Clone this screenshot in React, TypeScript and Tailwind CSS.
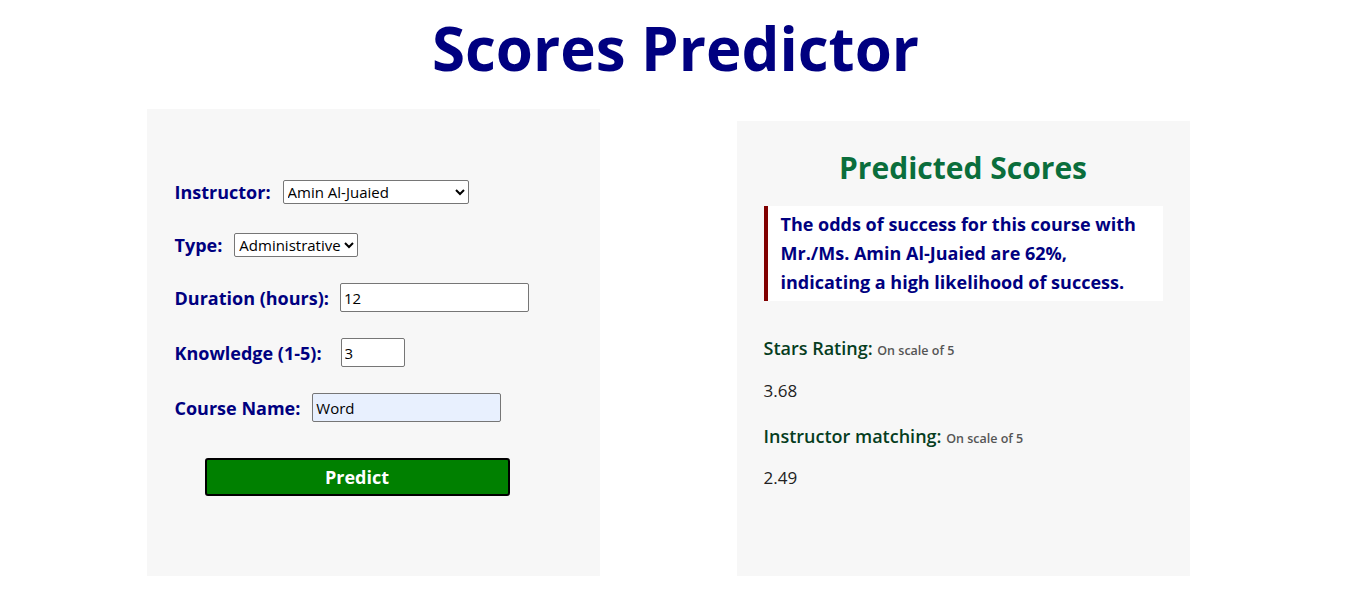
import React from "react";

const font = { fontFamily: '"Open Sans", "Noto Sans", sans-serif' };

const Label = ({ children }: { children: React.ReactNode }) => (
  <label className="text-[18px] font-bold leading-none text-[#000080]">{children}</label>
);

const App = () => {
  return (
    <div className="min-h-[611px] bg-white" style={font}>
      <h1 className="pl-[3px] pt-[8px] text-center text-[60px] font-bold leading-[80px] text-[#000080]">
        Scores Predictor
      </h1>

      <div className="mt-[21px] flex items-end justify-center gap-[137px] pr-[12px]">
        {/* form */}
        <div className="h-[467px] w-[453px] bg-[#f7f7f7] px-[28px] pt-[68px]">
          <div className="flex h-[29px] items-center gap-[12px]">
            <Label>Instructor:</Label>
            <select
              defaultValue="amin"
              className="h-[24px] w-[186px] rounded-[2px] border border-[#767676] bg-white text-[15px] text-black"
            >
              <option value="amin">Amin Al-Juaied</option>
            </select>
          </div>
          <div className="mt-[24px] flex h-[29px] items-center gap-[12px]">
            <Label>Type:</Label>
            <select
              defaultValue="admin"
              className="h-[24px] w-[124px] rounded-[2px] border border-[#767676] bg-white text-[15px] text-black"
            >
              <option value="admin">Administrative</option>
            </select>
          </div>
          <div className="mt-[24px] flex h-[29px] items-center gap-[11px]">
            <Label>Duration (hours):</Label>
            <input
              defaultValue="12"
              className="h-[29px] w-[189px] rounded-[2px] border border-[#767676] bg-white px-[3px] text-[15px] text-black"
            />
          </div>
          <div className="mt-[26px] flex h-[29px] items-center gap-[11px]">
            <Label>Knowledge (1-5):</Label>
            <input
              defaultValue="3"
              className="ml-[8px] h-[29px] w-[64px] rounded-[2px] border border-[#767676] bg-white px-[3px] text-[15px] text-black"
            />
          </div>
          <div className="mt-[26px] flex h-[29px] items-center gap-[12px]">
            <Label>Course Name:</Label>
            <input
              defaultValue="Word"
              className="h-[29px] w-[189px] rounded-[2px] border border-[#767676] bg-[#e8f0fe] px-[3px] text-[15px] text-black"
            />
          </div>
          <button className="ml-[30px] mt-[36px] flex h-[38px] w-[305px] items-center justify-center rounded-[3px] border-2 border-black bg-[#008000] text-[18px] font-bold text-white">
            Predict
          </button>
        </div>

        {/* results */}
        <div className="h-[455px] w-[453px] bg-[#f7f7f7] px-[27px] pt-[29px]">
          <h2 className="text-center text-[30px] font-bold leading-[36px] text-[#0a6e3c]">
            Predicted Scores
          </h2>
          <blockquote className="mt-[20px] border-l-[4px] border-[#800000] bg-white py-[4px] pl-[13px] pr-[8px] text-[18px] font-bold leading-[29px] text-[#000080]">
            The odds of success for this course with Mr./Ms. Amin Al-Juaied are 62%, indicating a
            high likelihood of success.
          </blockquote>

          <p className="mt-[34px] leading-[26px] text-[#063d1e]">
            <span className="text-[18px] font-semibold">Stars Rating: </span>
            <span className="text-[12.5px] font-semibold text-[#555]">On scale of 5</span>
          </p>
          <p className="mt-[14px] text-[17px] leading-[26px] text-[#222]">3.68</p>

          <p className="mt-[19px] leading-[26px] text-[#063d1e]">
            <span className="text-[18px] font-semibold">Instructor matching: </span>
            <span className="text-[12.5px] font-semibold text-[#555]">On scale of 5</span>
          </p>
          <p className="mt-[13px] text-[17px] leading-[26px] text-[#222]">2.49</p>
        </div>
      </div>
    </div>
  );
};

export default App;
